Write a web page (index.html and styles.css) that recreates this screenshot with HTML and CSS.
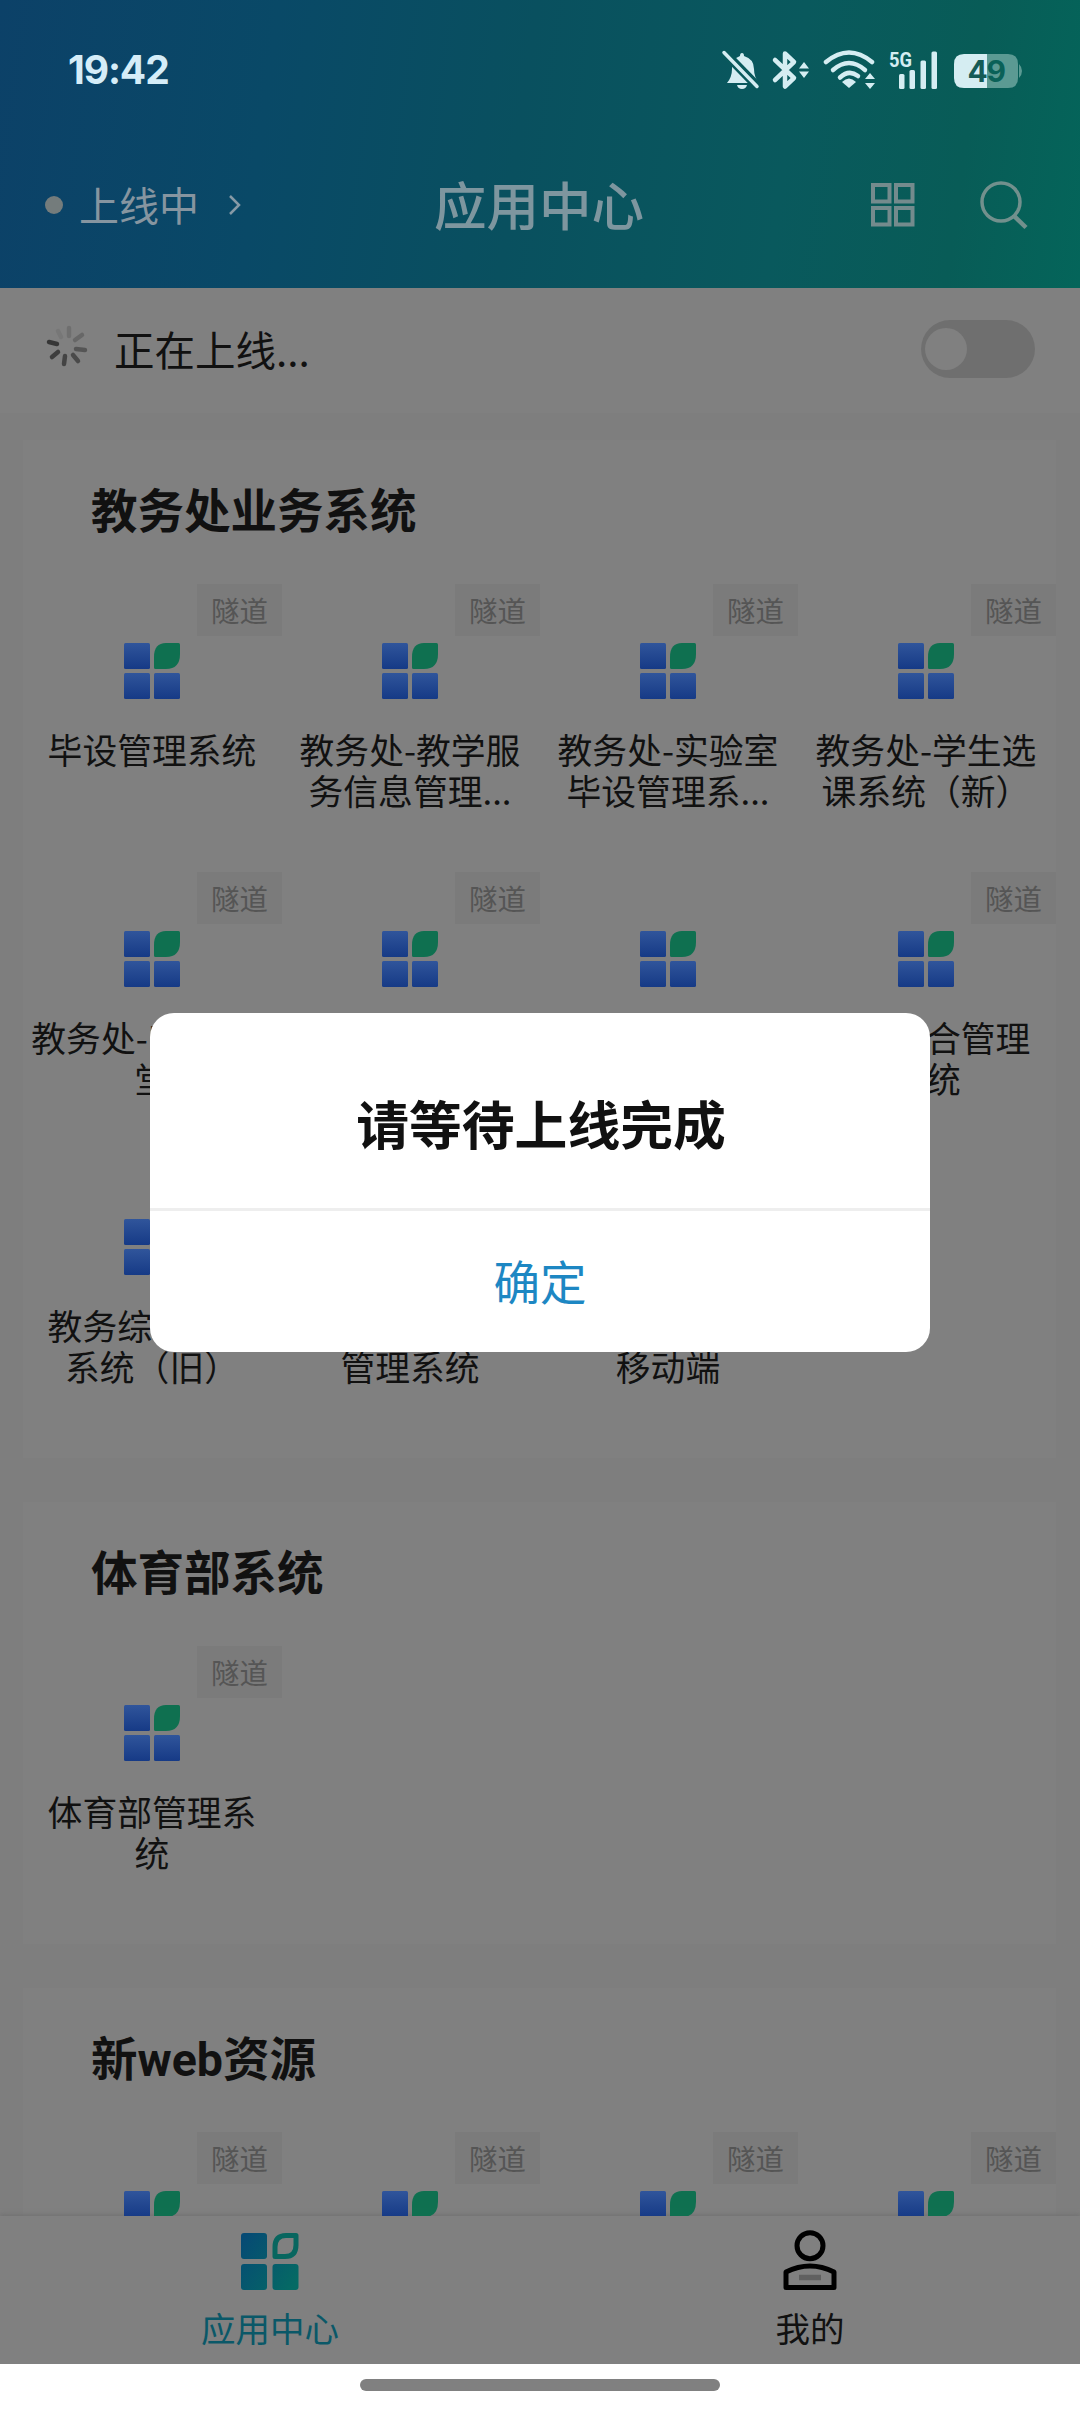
FILE: index.html
```html
<!DOCTYPE html>
<html lang="zh-CN">
<head>
<meta charset="utf-8">
<title>应用中心</title>
<link rel="stylesheet" href="styles.css">
</head>
<body>
<svg class="defs" width="0" height="0">
  <defs>
    <linearGradient id="blue" x1="0" y1="0" x2="0" y2="1"><stop offset="0" stop-color="#30559b"/><stop offset="1" stop-color="#163a86"/></linearGradient>
    <linearGradient id="nav" gradientUnits="userSpaceOnUse" x1="0" y1="10" x2="58" y2="48"><stop offset="0" stop-color="#064a74"/><stop offset="1" stop-color="#056a64"/></linearGradient>
    <symbol id="app" viewBox="0 0 56 56">
      <rect x="0" y="0" width="26" height="26" rx="1.500" fill="url(#blue)"/>
      <path d="M42 0H54.500Q56 0 56 1.500V11Q56 26 42 26H31.500Q30 26 30 24.500V14Q30 0 42 0Z" fill="#0f7050"/>
      <rect x="0" y="30" width="26" height="26" rx="1.500" fill="url(#blue)"/>
      <rect x="30" y="30" width="26" height="26" rx="1.500" fill="url(#blue)"/>
    </symbol>
  </defs>
</svg>
<div class="screen">
  <header class="top">
    <div class="statusbar">
      <span class="time">19:42</span>
      <svg class="sysicons" width="320" height="50" viewBox="0 0 320 50" fill="#d5edf2">
        <path d="M22 6Q22 3 24 3Q26 3 26 6Q36 9 36 19Q36 27 41 33H9Q14 27 14 19Q13 9 22 6ZM19 35H29Q28 39 24 39Q20 39 19 35Z"/>
        <path d="M5 1L41 38" stroke="#09595c" stroke-width="9"/>
        <path d="M6 2.500L39 36.500" stroke="#d5edf2" stroke-width="3.500" stroke-linecap="round"/>
        <path d="M57 10L76 28L67 36.500V3.500L76 12L57 30" fill="none" stroke="#d5edf2" stroke-width="4.500" stroke-linejoin="round" stroke-linecap="round"/>
        <path d="M86 12L91 18.500H81ZM86 28L91 21.500H81Z"/>
        <g fill="none" stroke="#d5edf2" stroke-width="4.500" stroke-linecap="round"><path d="M108 12Q131 -7 154 12"/><path d="M115 20Q131 6 147 20"/><path d="M122 27.500Q131 19 140 26"/></g>
        <path d="M131 38L124 32Q131 25 138 32Z"/>
        <path d="M152 23L157 29H147ZM152 39L157 33H147Z"/>
        <rect x="181" y="24" width="5.500" height="15" rx="1.500"/><rect x="191.500" y="20" width="5.500" height="19" rx="1.500"/><rect x="202.500" y="10.500" width="5.500" height="28.500" rx="1.500"/><rect x="213.500" y="1.500" width="5.500" height="37.500" rx="1.500"/>
        <text x="171" y="16.500" class="fiveg" textLength="23" lengthAdjust="spacingAndGlyphs">5G</text>
        <path d="M269 4H290Q300 4 300 14V28Q300 38 290 38H269ZM301 14Q304 17 304 21Q304 25 301 28Z" fill="#5b9a93"/>
        <path d="M269 4H246Q236 4 236 14V28Q236 38 246 38H269Z"/>
        <text x="249.500" y="31.500" class="batt" fill="#155b56">4</text><text x="268.500" y="31.500" class="batt" fill="#0a6158">9</text>
      </svg>
    </div>
    <div class="titlebar">
      <div class="state"><i class="dot"></i><span>上线中</span>
        <svg width="14" height="22" viewBox="0 0 14 22" fill="none" stroke="#879aa6" stroke-width="2.500"><path d="M2 2L11 11L2 20"/></svg>
      </div>
      <h1>应用中心</h1>
      <div class="tools">
        <svg width="44" height="44" viewBox="0 0 44 44" fill="none" stroke="#748b8d" stroke-width="4"><rect x="2" y="2" width="16.500" height="16.500"/><rect x="25" y="2" width="16.500" height="16.500"/><rect x="2" y="25" width="16.500" height="16.500"/><rect x="25" y="25" width="16.500" height="16.500"/></svg>
        <svg width="50" height="50" viewBox="0 0 50 50" fill="none" stroke="#72908d" stroke-width="3.500"><circle cx="22" cy="22" r="19"/><path d="M35 36L47 47.500" stroke-width="4.500"/></svg>
      </div>
    </div>
  </header>
  <div class="online">
    <svg width="42" height="42" viewBox="-21 -21 42 42" stroke-width="4.500" stroke-linecap="round">
      <path d="M2 -10V-18" stroke="#6f6f6f"/><path d="M8 -6L15 -11" stroke="#676767"/><path d="M9 3L18 4" stroke="#555"/><path d="M6 9L11 15" stroke="#4a4a4a"/><path d="M-2 10L-3 18" stroke="#444"/><path d="M-9 6L-15 11" stroke="#3d3d3d"/><path d="M-10 -2L-18 -4" stroke="#363636"/><path d="M-6 -9L-9 -15" stroke="#777"/>
    </svg>
    <span>正在上线...</span>
    <div class="switch"><i></i></div>
  </div>
  <main>
    <section>
      <h2>教务处业务系统</h2>
      <div class="grid">
        <div class="cell"><b>隧道</b><svg><use href="#app"/></svg><p>毕设管理系统</p></div>
        <div class="cell"><b>隧道</b><svg><use href="#app"/></svg><p>教务处-教学服<br>务信息管理...</p></div>
        <div class="cell"><b>隧道</b><svg><use href="#app"/></svg><p>教务处-实验室<br>毕设管理系...</p></div>
        <div class="cell"><b>隧道</b><svg><use href="#app"/></svg><p>教务处-学生选<br>课系统（新）</p></div>
        <div class="cell"><b>隧道</b><svg><use href="#app"/></svg><p>教务处-E智慧课<br>堂</p></div>
        <div class="cell"><b>隧道</b><svg><use href="#app"/></svg></div>
        <div class="cell"><svg><use href="#app"/></svg></div>
        <div class="cell"><b>隧道</b><svg><use href="#app"/></svg><p>教务综合管理<br>系统</p></div>
        <div class="cell"><svg><use href="#app"/></svg><p>教务综合管理<br>系统（旧）</p></div>
        <div class="cell"><svg><use href="#app"/></svg><p>教务综合<br>管理系统</p></div>
        <div class="cell"><svg><use href="#app"/></svg><p>教务系统<br>移动端</p></div>
      </div>
    </section>
    <section>
      <h2>体育部系统</h2>
      <div class="grid">
        <div class="cell"><b>隧道</b><svg><use href="#app"/></svg><p>体育部管理系<br>统</p></div>
      </div>
    </section>
    <section>
      <h2>新<span class="latin">web</span>资源</h2>
      <div class="grid">
        <div class="cell"><b>隧道</b><svg><use href="#app"/></svg></div>
        <div class="cell"><b>隧道</b><svg><use href="#app"/></svg></div>
        <div class="cell"><b>隧道</b><svg><use href="#app"/></svg></div>
        <div class="cell"><b>隧道</b><svg><use href="#app"/></svg></div>
      </div>
    </section>
  </main>
  <nav>
    <div class="tab active">
      <svg width="58" height="60" viewBox="0 0 58 60" fill="url(#nav)"><rect x="0" y="3" width="26" height="26" rx="3"/><rect x="0" y="34" width="26" height="26" rx="3"/><rect x="31.500" y="34" width="26" height="26" rx="3"/><path d="M45 5.500H55V15Q55 26.500 44 26.500H34V17Q34 5.500 45 5.500Z" fill="none" stroke="#08665f" stroke-width="5" stroke-linejoin="round"/></svg>
      <span>应用中心</span>
    </div>
    <div class="tab">
      <svg width="54" height="60" viewBox="0 0 54 60" fill="none" stroke="#000" stroke-width="5"><circle cx="27" cy="15.700" r="13"/><path d="M3 42Q27 30 51 42V57.500H3Z" stroke-linejoin="round"/><path d="M16 47.500H38" stroke="#606060" stroke-width="5.500"/></svg>
      <span>我的</span>
    </div>
  </nav>
  <div class="gesture"><i></i></div>
  <div class="dialog"><div class="msg">请等待上线完成</div><div class="ok">确定</div></div>
</div>
</body>
</html>
```
FILE: styles.css
```css
* { box-sizing: border-box; margin: 0; padding: 0; }
body { width: 1080px; height: 2412px; overflow: hidden; background: #7e7e7e; color: #111; font-family: "Noto Sans CJK SC", sans-serif; }
.defs { position: absolute; }
.screen { position: relative; display: flex; flex-direction: column; width: 1080px; height: 2412px; overflow: hidden; }
.top { height: 288px; flex: none; background: linear-gradient(98deg, #0c4168 0%, #094967 25%, #09505f 48%, #09595d 72%, #085c57 88%, #04655a 100%); }
.statusbar { display: flex; justify-content: space-between; height: 116px; padding: 48px 42px 0 68px; color: #d5edf8; }
.time { font: 700 39px/44px Inter, sans-serif; letter-spacing: -1.1px; }
.sysicons { margin-top: 2px; }
.fiveg { font: 700 20px Roboto, sans-serif; }
.batt { font: 700 30px Inter, sans-serif; }
.titlebar { display: grid; grid-template-columns: 1fr auto 1fr; align-items: center; height: 178px; padding: 0 51px 0 45px; }
.state { display: flex; align-items: center; font-size: 40px; color: #8695a0; }
.state span { margin-top: -2px; }
.dot { width: 18px; height: 18px; border-radius: 50%; background: #747c7c; margin-right: 16px; }
.state svg { margin-left: 29px; }
h1 { margin: -4px -4px 0 0; font-size: 52.500px; font-weight: 500; color: #7e969f; }
.tools { display: flex; justify-content: flex-end; align-items: center; gap: 64px; }
.online { display: flex; align-items: center; flex: none; height: 125px; padding: 0 45px 3px 46px; background: #808080; font-size: 40.500px; }
.online svg { margin-bottom: 6px; }
.online span { margin: -2px 0 0 26px; }
.switch { margin-left: auto; width: 114px; height: 58px; padding: 8px 4px; border-radius: 29px; background: #6f6f6f; }
.switch i { display: block; width: 42px; height: 42px; border-radius: 50%; background: #808080; }
main { flex: 1; min-height: 0; overflow: hidden; padding: 27px 24px 0 23px; }
section { margin-bottom: 44px; background: #808080; }
h2 { height: 144px; padding: 34px 0 0 68px; font-size: 46.500px; line-height: 68px; font-weight: 700; }
.latin { font-family: Roboto, sans-serif; }
.grid { display: grid; grid-template-columns: repeat(4, 258px); grid-auto-rows: 288px; padding-bottom: 10px; }
.cell { position: relative; display: flex; flex-direction: column; align-items: center; padding-top: 59px; }
.cell b { position: absolute; right: -1px; top: 0; width: 85px; height: 52px; background: #7b7b7b; color: #555; font-size: 28.500px; font-weight: 400; line-height: 52px; text-align: center; }
.cell svg { width: 56px; height: 56px; }
.cell p { margin-top: 30px; font-size: 34.800px; line-height: 41px; text-align: center; white-space: nowrap; }
nav { display: flex; flex: none; height: 148px; background: #808080; box-shadow: 0 -1px 5px #6f6f6f; }
.tab { flex: 1; display: flex; flex-direction: column; align-items: center; padding-top: 14px; font-size: 34.500px; line-height: 50px; }
.tab span { margin-top: 12px; }
.active { color: #0a5868; }
.gesture { position: relative; display: flex; justify-content: center; flex: none; height: 48px; padding-top: 15px; background: #fff; }
.gesture i { width: 360px; height: 12px; border-radius: 6px; background: #808080; }
.dialog { position: absolute; left: 150px; top: 1013px; width: 780px; height: 339px; border-radius: 24px; background: #fff; text-align: center; overflow: hidden; }
.msg { height: 198px; padding: 71px 0 0 2px; border-bottom: 3px solid #eee; font-size: 52.800px; line-height: 76px; font-weight: 700; }
.ok { padding-top: 35px; color: #1d87c3; font-size: 46.500px; line-height: 68px; }
```
